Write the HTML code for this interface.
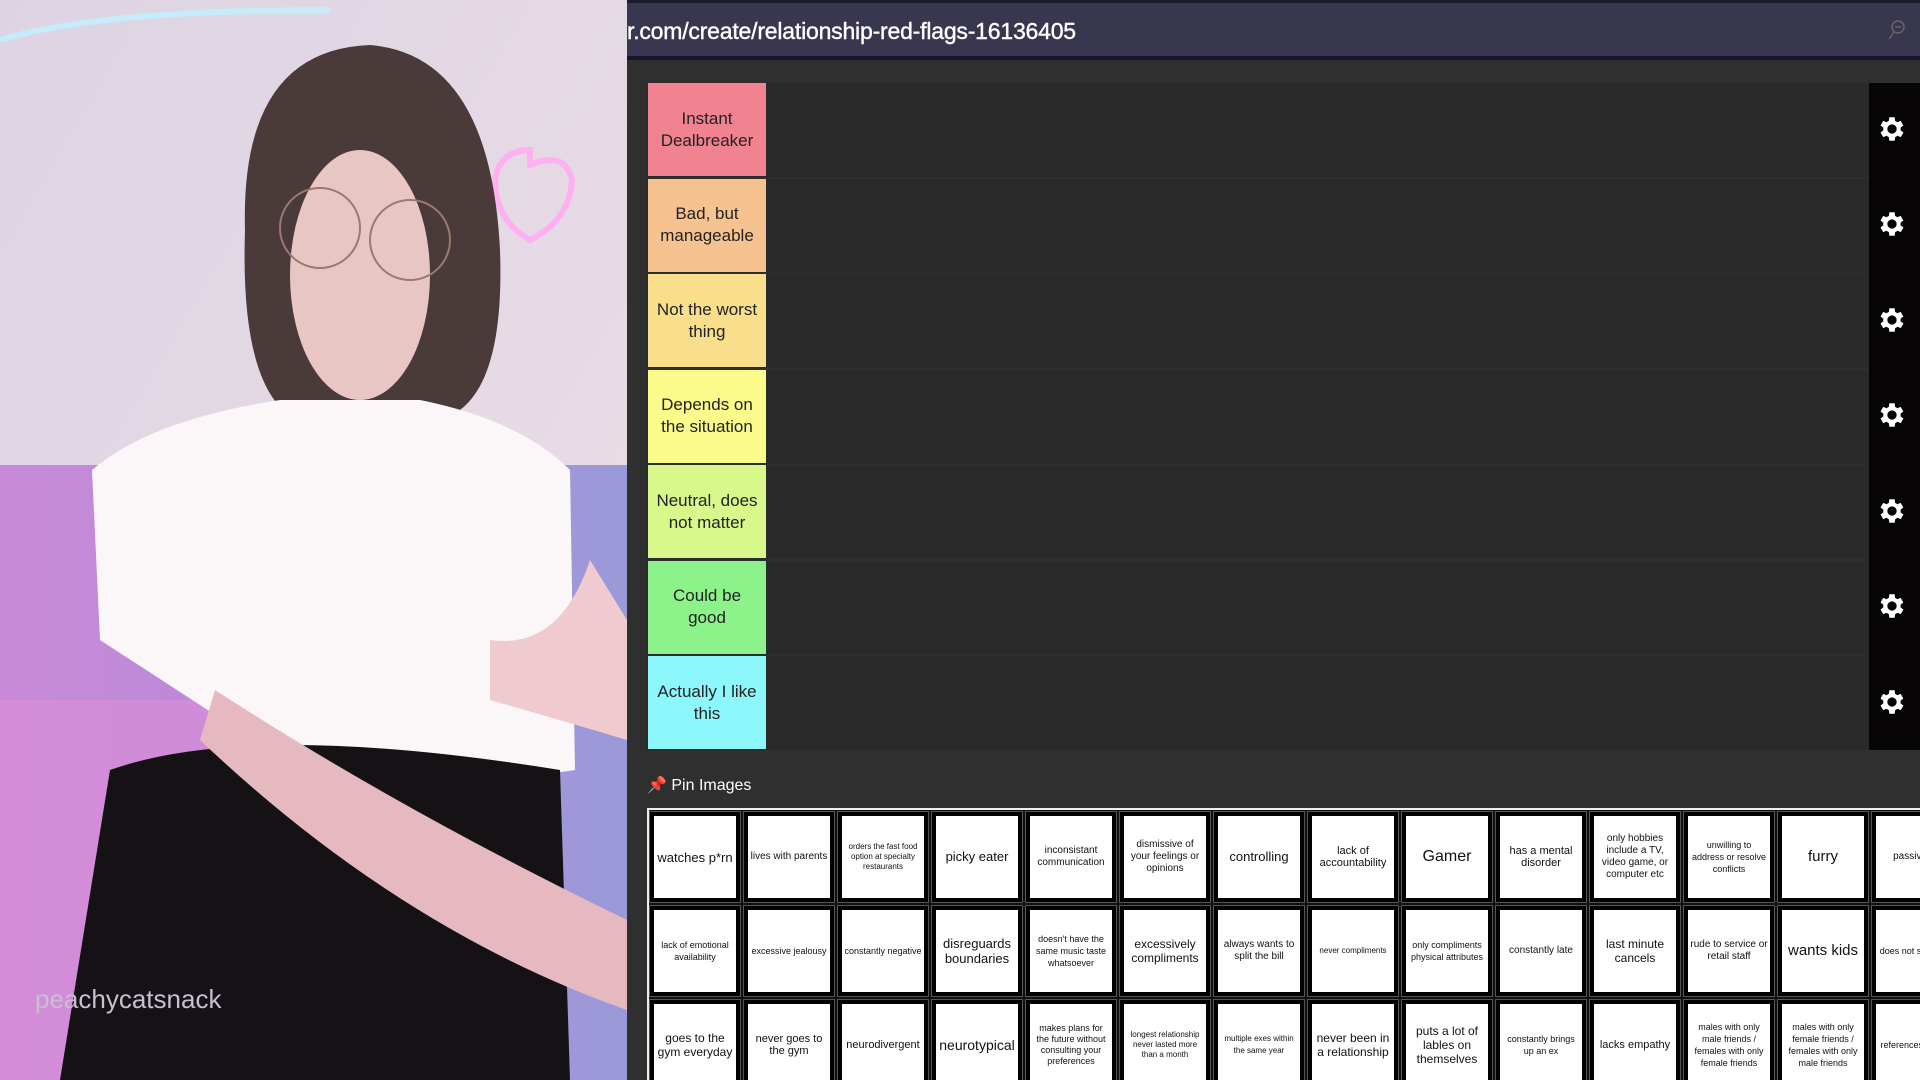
<!DOCTYPE html>
<html><head><meta charset="utf-8"><style>
*{margin:0;padding:0;box-sizing:border-box}
body{width:1920px;height:1080px;overflow:hidden;background:#2e2d2d;font-family:"Liberation Sans",sans-serif;position:relative}
#left{position:absolute;left:0;top:0;width:627px;height:1080px;overflow:hidden}
#right{position:absolute;left:627px;top:0;width:1293px;height:1080px;background:#302f2f;overflow:hidden}
#url{position:absolute;left:0;top:0;width:1293px;height:60px;background:#38374f;border-top:3px solid #1c1b2c;border-bottom:4px solid #16152a}
#url span{position:absolute;left:0;top:15px;color:#fff;font-size:23px;letter-spacing:-0.2px;-webkit-text-stroke:0.4px #fff}
.row{position:absolute;left:20px;width:1223px;height:94px;background:#2b2a2a}
.lab{position:absolute;left:1px;top:0;width:118px;height:93px;display:flex;align-items:center;justify-content:center;text-align:center;font-size:17px;line-height:22px;color:#222;padding:0 4px}
#gears{position:absolute;left:1242px;top:83px;width:51px;height:667px;background:#070405}
.g{position:absolute;left:7px;width:32px;height:32px}
#pin{position:absolute;left:20px;top:775px;color:#fff;font-size:16px}
#grid{position:absolute;left:20px;top:808px;width:1280px;height:280px;background:#111;border-top:2px solid #eee;border-left:2px solid #eee}
.c{position:absolute;width:90px;height:90px;background:#fff;border:4px solid #000;outline:1px solid #555;display:flex;align-items:center;justify-content:center;text-align:center;font-size:10px;line-height:12px;color:#111;padding:2px}
</style></head><body>
<div id="left">
<svg width="627" height="1080" viewBox="0 0 627 1080">
<defs>
<linearGradient id="wall" x1="0" y1="0" x2="1" y2="1"><stop offset="0" stop-color="#ddd4e3"/><stop offset="1" stop-color="#ecdfe6"/></linearGradient>
<linearGradient id="sofa" x1="0" y1="0" x2="1" y2="0"><stop offset="0" stop-color="#c88ad8"/><stop offset=".5" stop-color="#b58ad8"/><stop offset="1" stop-color="#9a9ad8"/></linearGradient>
</defs>
<rect width="627" height="1080" fill="url(#wall)"/>
<rect y="465" width="627" height="615" fill="url(#sofa)"/>
<rect x="0" y="700" width="230" height="380" fill="#dc8ed8" opacity=".6"/>
<path d="M0 40 Q100 10 330 10" stroke="#bff0ff" stroke-width="6" fill="none" opacity=".8"/>
<path d="M530 150 Q500 150 495 180 Q495 220 530 240 Q570 220 572 180 Q565 150 530 165Z" stroke="#ffb0f0" stroke-width="6" fill="none"/>
<path d="M245 230 Q240 50 370 45 Q490 55 500 250 Q505 390 450 416 L290 416 Q240 380 245 230Z" fill="#4a3a3a"/>
<ellipse cx="360" cy="275" rx="70" ry="125" fill="#e8c6c4"/>
<path d="M270 180 Q330 70 460 190 L450 120 Q360 55 280 120Z" fill="#4a3a3a"/>
<circle cx="320" cy="228" r="40" fill="none" stroke="#9a7a70" stroke-width="2"/>
<circle cx="410" cy="240" r="40" fill="none" stroke="#9a7a70" stroke-width="2"/>
<path d="M92 470 Q150 420 280 400 L420 400 Q520 420 570 470 L575 770 Q450 790 300 770 L100 640 Z" fill="#fbf7f8"/>
<path d="M110 770 Q250 720 560 770 L570 1080 L60 1080 Z" fill="#151216"/>
<path d="M215 690 Q400 810 627 920 L627 1010 Q400 930 200 740 Z" fill="#e6b9c1"/>
<path d="M490 640 Q560 650 590 560 L627 620 L627 740 Q560 720 490 700Z" fill="#efcbd0"/>
<text x="35" y="1008" font-size="26" fill="#c8bfd0" font-family="Liberation Sans">peachycatsnack</text>
</svg>
</div>
<div id="right">
<div id="url"><span>r.com/create/relationship-red-flags-16136405</span>
<svg style="position:absolute;right:14px;top:16px" width="20" height="22" viewBox="0 0 20 22"><circle cx="12" cy="8" r="6" fill="none" stroke="#666" stroke-width="1.5"/><path d="M8 13 L3 20 M9 8 H15" stroke="#666" stroke-width="1.5"/></svg></div>
<div class="row" style="top:83px"><div class="lab" style="background:#f1828f">Instant Dealbreaker</div></div>
<div class="row" style="top:178.5px"><div class="lab" style="background:#f6c28f">Bad, but manageable</div></div>
<div class="row" style="top:274px"><div class="lab" style="background:#f9df8c">Not the worst thing</div></div>
<div class="row" style="top:369.5px"><div class="lab" style="background:#fbfb8c">Depends on the situation</div></div>
<div class="row" style="top:465px"><div class="lab" style="background:#d9f88c">Neutral, does not matter</div></div>
<div class="row" style="top:560.5px"><div class="lab" style="background:#8cf28a">Could be good</div></div>
<div class="row" style="top:656px"><div class="lab" style="background:#8cf8fb">Actually I like this</div></div>
<div id="gears">
<svg width="0" height="0"><defs><symbol id="gear" viewBox="0 0 24 24"><path fill="#fff" d="M19.4 13a7.5 7.5 0 0 0 0-2l2.1-1.6-2-3.5-2.5 1a7.6 7.6 0 0 0-1.7-1L15 3.2h-4l-.4 2.7a7.6 7.6 0 0 0-1.7 1l-2.5-1-2 3.5L6.5 11a7.5 7.5 0 0 0 0 2l-2.1 1.6 2 3.5 2.5-1a7.6 7.6 0 0 0 1.7 1l.4 2.7h4l.4-2.7a7.6 7.6 0 0 0 1.7-1l2.5 1 2-3.5zM13 15.5a3.5 3.5 0 1 1 0-7 3.5 3.5 0 0 1 0 7z" transform="translate(-1 0)"/></symbol></defs></svg>
<svg class="g" style="top:30px"><use href="#gear"/></svg>
<svg class="g" style="top:125px"><use href="#gear"/></svg>
<svg class="g" style="top:221px"><use href="#gear"/></svg>
<svg class="g" style="top:316px"><use href="#gear"/></svg>
<svg class="g" style="top:412px"><use href="#gear"/></svg>
<svg class="g" style="top:507px"><use href="#gear"/></svg>
<svg class="g" style="top:603px"><use href="#gear"/></svg>
</div>
<div id="pin"><span style="color:#e0405a">📌</span> Pin Images</div>
<div id="grid">
<div class="c" style="left:1px;top:2px;font-size:13px;line-height:15px">watches p*rn</div>
<div class="c" style="left:95px;top:2px">lives with parents</div>
<div class="c" style="left:189px;top:2px;font-size:8px;line-height:10px">orders the fast food option at specialty restaurants</div>
<div class="c" style="left:283px;top:2px;font-size:13px">picky eater</div>
<div class="c" style="left:377px;top:2px">inconsistant communication</div>
<div class="c" style="left:471px;top:2px">dismissive of your feelings or opinions</div>
<div class="c" style="left:565px;top:2px;font-size:13px">controlling</div>
<div class="c" style="left:659px;top:2px;font-size:11px">lack of accountability</div>
<div class="c" style="left:753px;top:2px;font-size:16px">Gamer</div>
<div class="c" style="left:847px;top:2px;font-size:11px">has a mental disorder</div>
<div class="c" style="left:941px;top:2px">only hobbies include a TV, video game, or computer etc</div>
<div class="c" style="left:1035px;top:2px;font-size:9px">unwilling to address or resolve conflicts</div>
<div class="c" style="left:1129px;top:2px;font-size:15px">furry</div>
<div class="c" style="left:1223px;top:2px">passive ag</div>
<div class="c" style="left:1px;top:96px;font-size:9px">lack of emotional availability</div>
<div class="c" style="left:95px;top:96px;font-size:9px">excessive jealousy</div>
<div class="c" style="left:189px;top:96px;font-size:9px">constantly negative</div>
<div class="c" style="left:283px;top:96px;font-size:13px;line-height:15px">disreguards boundaries</div>
<div class="c" style="left:377px;top:96px;font-size:9px">doesn't have the same music taste whatsoever</div>
<div class="c" style="left:471px;top:96px;font-size:12px;line-height:14px">excessively compliments</div>
<div class="c" style="left:565px;top:96px">always wants to split the bill</div>
<div class="c" style="left:659px;top:96px;font-size:8px">never compliments</div>
<div class="c" style="left:753px;top:96px;font-size:9px">only compliments physical attributes</div>
<div class="c" style="left:847px;top:96px">constantly late</div>
<div class="c" style="left:941px;top:96px;font-size:12px;line-height:14px">last minute cancels</div>
<div class="c" style="left:1035px;top:96px">rude to service or retail staff</div>
<div class="c" style="left:1129px;top:96px;font-size:15px">wants kids</div>
<div class="c" style="left:1223px;top:96px;font-size:9px">does not single clo</div>
<div class="c" style="left:1px;top:190px;font-size:12px;line-height:14px">goes to the gym everyday</div>
<div class="c" style="left:95px;top:190px;font-size:11px">never goes to the gym</div>
<div class="c" style="left:189px;top:190px;font-size:11px">neurodivergent</div>
<div class="c" style="left:283px;top:190px;font-size:14px">neurotypical</div>
<div class="c" style="left:377px;top:190px;font-size:9px;line-height:11px">makes plans for the future without consulting your preferences</div>
<div class="c" style="left:471px;top:190px;font-size:8px;line-height:10px">longest relationship never lasted more than a month</div>
<div class="c" style="left:565px;top:190px;font-size:8px">multiple exes within the same year</div>
<div class="c" style="left:659px;top:190px;font-size:12px;line-height:14px">never been in a relationship</div>
<div class="c" style="left:753px;top:190px;font-size:12px;line-height:14px">puts a lot of lables on themselves</div>
<div class="c" style="left:847px;top:190px;font-size:9px">constantly brings up an ex</div>
<div class="c" style="left:941px;top:190px;font-size:11px">lacks empathy</div>
<div class="c" style="left:1035px;top:190px;font-size:9px">males with only male friends / females with only female friends</div>
<div class="c" style="left:1129px;top:190px;font-size:9px">males with only female friends / females with only male friends</div>
<div class="c" style="left:1223px;top:190px;font-size:9px">references gender</div>
</div>
</div>
</body></html>
